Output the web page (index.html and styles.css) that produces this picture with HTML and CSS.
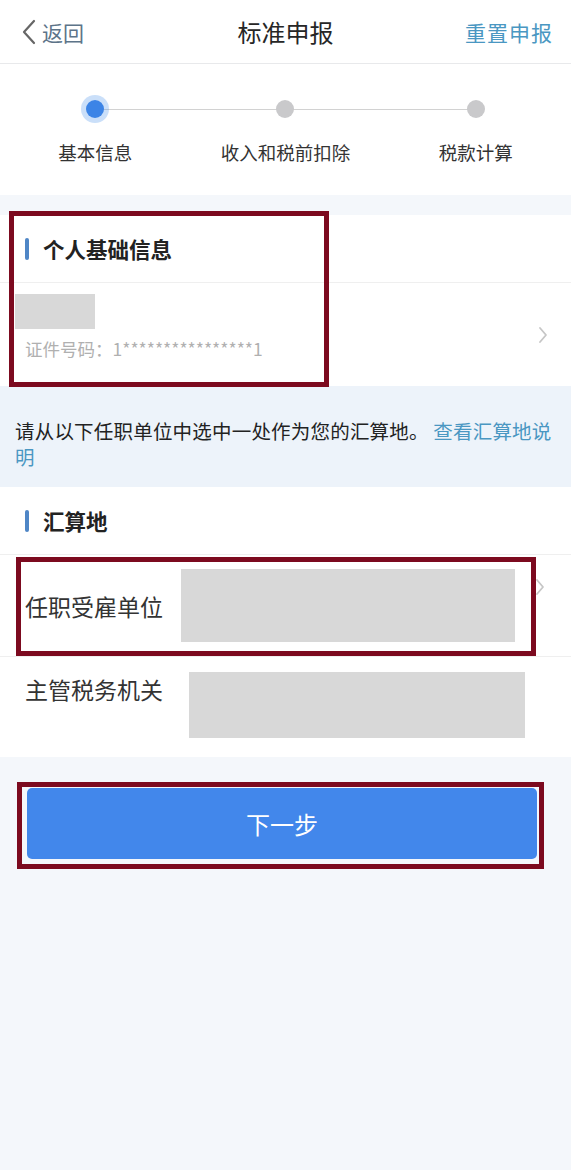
FILE: index.html
```html
<!DOCTYPE html>
<html lang="zh-CN">
<head>
    <meta charset="UTF-8">
    <meta name="viewport" content="width=device-width, initial-scale=1.0">
    <title>标准申报</title>
    <link rel="stylesheet" href="styles.css">
</head>
<body>

    <div class="page">
        <header class="top-bar">
            <a class="back" href="#">
                <svg width="16" height="26" viewBox="0 0 16 26"><path d="M13 2 L3 13 L13 24" fill="none" stroke="#666" stroke-width="2.2" stroke-linecap="round" stroke-linejoin="round"/></svg>
                <span>返回</span>
            </a>
            <h1 class="title">标准申报</h1>
            <a class="reset" href="#">重置申报</a>
        </header>

        <div class="steps">
            <div class="step active">
                <div class="dot-wrap"><span class="dot"></span></div>
                <div class="step-label">基本信息</div>
            </div>
            <div class="step">
                <div class="dot-wrap"><span class="dot"></span></div>
                <div class="step-label">收入和税前扣除</div>
            </div>
            <div class="step last">
                <div class="dot-wrap"><span class="dot"></span></div>
                <div class="step-label">税款计算</div>
            </div>
        </div>

        <section class="card card-person">
            <div class="card-head"><span class="bar"></span>个人基础信息</div>
            <div class="person-row">
                <div class="person-info">
                    <div class="mask mask-name"></div>
                    <div class="id-no">证件号码：1****************1</div>
                </div>
                <svg class="arrow" width="10" height="18" viewBox="0 0 10 18"><path d="M2 2 L8 9 L2 16" fill="none" stroke="#c6c6c6" stroke-width="1.8" stroke-linecap="round" stroke-linejoin="round"/></svg>
            </div>
        </section>

        <p class="notice">请从以下任职单位中选中一处作为您的汇算地。 <a href="#">查看汇算地说明</a></p>

        <section class="card card-place">
            <div class="card-head"><span class="bar"></span>汇算地</div>
            <div class="place-row employer">
                <span class="row-label">任职受雇单位</span>
                <div class="mask mask-employer"></div>
                <svg class="arrow arrow-up" width="10" height="18" viewBox="0 0 10 18"><path d="M2 2 L8 9 L2 16" fill="none" stroke="#c6c6c6" stroke-width="1.8" stroke-linecap="round" stroke-linejoin="round"/></svg>
            </div>
            <div class="place-row office">
                <span class="row-label">主管税务机关</span>
                <div class="mask mask-office"></div>
            </div>
        </section>

        <button class="next-btn" type="button">下一步</button>

        <!-- red annotation frames drawn over the screenshot -->
        <div class="mark mark-person"></div>
        <div class="mark mark-employer"></div>
        <div class="mark mark-button"></div>
    </div>

</body>
</html>
```

FILE: styles.css
```css
/* Global Styles */
body {
    margin: 0;
    padding: 0;
    background: #f4f7fb;
    font-family: "Noto Sans CJK SC", "Noto Sans", sans-serif;
    color: #333;
}

.page {
    position: relative;
    min-height: 1170px;
}

a {
    text-decoration: none;
}

/* Top bar */
.top-bar {
    height: 63px;
    background: #fff;
    border-bottom: 1px solid #e8e9eb;
    display: flex;
    align-items: center;
    justify-content: space-between;
    padding: 0 18px 0 21px;
    position: relative;
}

.back {
    display: flex;
    align-items: center;
    gap: 5px;
    color: #5d7489;
    font-size: 21px;
}

.title {
    position: absolute;
    left: 0;
    right: 0;
    text-align: center;
    margin: 0;
    font-size: 24px;
    font-weight: 400;
    color: #262626;
    pointer-events: none;
}

.reset {
    color: #4a97c2;
    font-size: 21px;
    letter-spacing: 1px;
}

/* Steps */
.steps {
    background: #fff;
    display: grid;
    grid-template-columns: repeat(3, 1fr);
    padding: 31px 0 30px;
}

.step {
    display: flex;
    flex-direction: column;
    align-items: center;
    position: relative;
}

.step::after {
    content: "";
    position: absolute;
    top: 14px;
    left: 50%;
    width: 100%;
    height: 1px;
    background: #d2d2d2;
}

.step.last::after {
    display: none;
}

.dot-wrap {
    width: 28px;
    height: 28px;
    display: flex;
    align-items: center;
    justify-content: center;
    position: relative;
    z-index: 1;
}

.dot {
    width: 18px;
    height: 18px;
    border-radius: 50%;
    background: #c9c9cb;
}

.step.active .dot-wrap {
    border-radius: 50%;
    background: rgba(80, 150, 235, 0.3);
}

.step.active .dot {
    background: #3c84e6;
}

.step-label {
    margin-top: 16px;
    font-size: 18.5px;
    line-height: 26px;
    color: #333;
}

/* Cards */
.card {
    background: #fff;
}

.card-person {
    margin-top: 20px;
}

.card-head {
    height: 67px;
    border-bottom: 1px solid #efefef;
    display: flex;
    align-items: center;
    padding-left: 25px;
    font-size: 21.5px;
    font-weight: 700;
    color: #222;
}

.bar {
    width: 4px;
    height: 22px;
    border-radius: 2px;
    background: #4f86c6;
    margin-right: 14px;
}

.person-row {
    height: 103px;
    display: flex;
    align-items: center;
    padding: 0 23px 0 15px;
}

.person-info {
    flex: 1;
    align-self: flex-start;
    padding-top: 11px;
}

.mask {
    background: #d8d8d8;
}

.mask-name {
    width: 80px;
    height: 35px;
}

.id-no {
    margin-top: 8px;
    padding-left: 10px;
    font-size: 17.5px;
    line-height: 24px;
    color: #b0b0b0;
}

.arrow {
    flex: none;
}

/* Notice */
.notice {
    margin: 0;
    background: #edf3fa;
    padding: 32px 16px 17px 15px;
    font-size: 19.5px;
    line-height: 26px;
    letter-spacing: 0.2px;
    color: #222;
}

.notice a {
    color: #4a97c2;
}

/* Place rows */
.place-row {
    display: flex;
    padding-left: 25px;
}

.row-label {
    font-size: 23px;
    line-height: 30px;
    color: #333;
    flex: none;
}

.employer {
    height: 101px;
    align-items: center;
    border-bottom: 1px solid #efefef;
}

.mask-employer {
    width: 334px;
    height: 73px;
    margin-left: 18px;
}

.arrow-up {
    align-self: flex-start;
    margin: 23px 0 0 20px;
}

.office {
    height: 100px;
    align-items: flex-start;
    padding-top: 15px;
    box-sizing: border-box;
}

.office .row-label {
    margin-top: 2px;
}

.mask-office {
    width: 336px;
    height: 66px;
    margin-left: 26px;
}

/* Button */
.next-btn {
    display: block;
    width: 510px;
    height: 71px;
    margin: 31px 0 0 27px;
    border: none;
    border-radius: 5px;
    background: #4287eb;
    color: #fff;
    font-family: inherit;
    font-size: 24px;
    cursor: pointer;
}

/* Annotation frames */
.mark {
    position: absolute;
    border: 5px solid #7c0a1f;
    box-sizing: border-box;
    pointer-events: none;
}

.mark-person {
    left: 9px;
    top: 211px;
    width: 320px;
    height: 176px;
}

.mark-employer {
    left: 16px;
    top: 557px;
    width: 520px;
    height: 99px;
}

.mark-button {
    left: 17px;
    top: 782px;
    width: 527px;
    height: 87px;
}
```
